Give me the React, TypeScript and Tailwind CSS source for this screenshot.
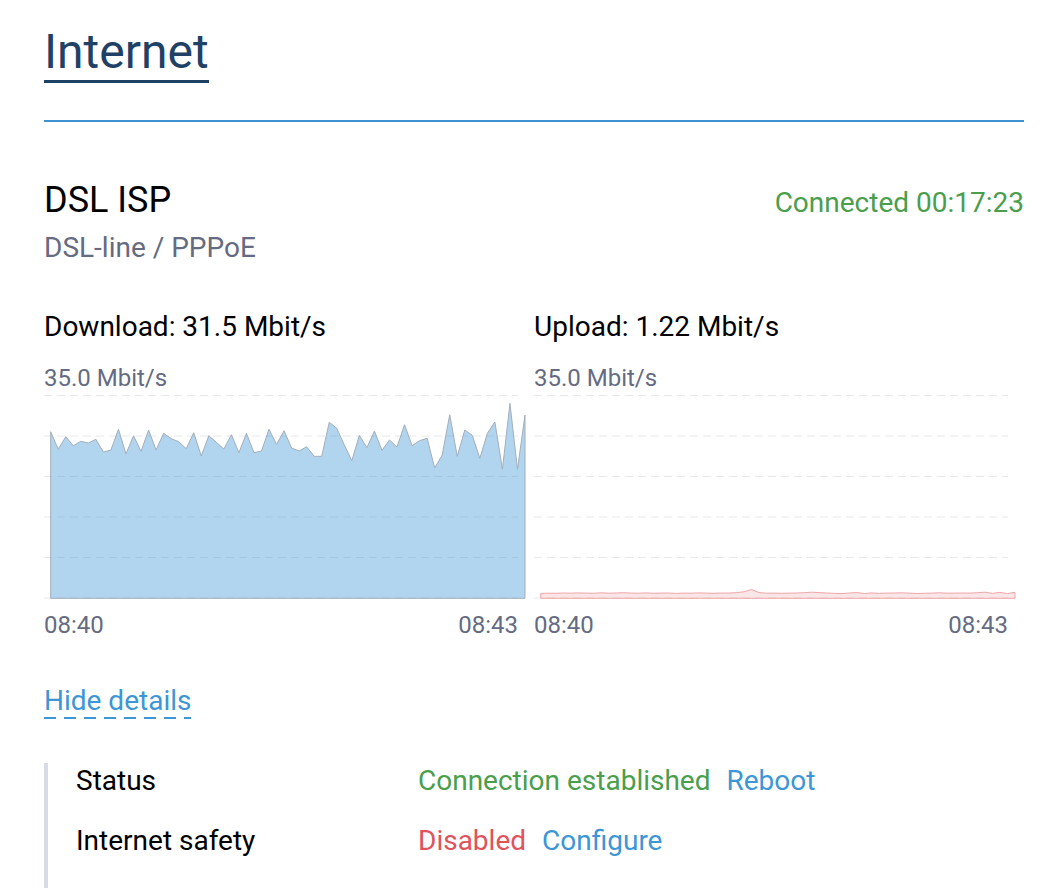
import React from "react";

const GRID = [0.5, 41, 81.5, 122, 162.5, 203];

const download = [
  36.7, 54.3, 41.7, 50.7, 46.3, 48, 44.3, 57, 55, 34.3, 59, 40.7, 56.3, 35, 55, 38.3,
  43.7, 46.7, 53.7, 37.7, 61, 40.7, 47.3, 54, 39.7, 57.7, 38.3, 57.7, 56, 34.3, 49.3, 35.7,
  53, 56, 51.7, 61.3, 61.3, 27.3, 33.3, 50, 65.7, 40.3, 52.7, 36, 55.3, 45, 52, 29.7,
  50.7, 45.7, 43.3, 73, 60, 19.7, 61.3, 35, 40.3, 63.3, 38.3, 27, 74.3, 8.3, 74.3, 20,
];

const upload = [
  198.4, 198.2, 198.3, 198, 198.2, 197.9, 198.1, 198.3, 197.8, 198.2, 198, 197.7, 198.1, 198.2, 197.9, 198.3,
  198.1, 198, 198.4, 198.1, 198.2, 197.9, 198.1, 198.3, 198, 198.1, 197.6, 196.8, 194.5, 197.6, 198.2, 198.1,
  198.3, 198.2, 198, 197.7, 197.2, 197.6, 198, 198.4, 198.6, 198, 197.6, 198.5, 197.9, 198.4, 198.1, 198,
  197.8, 198.2, 198.5, 198.3, 198.1, 197.8, 198.2, 198.1, 198, 198.1, 197.7, 197.2, 198.4, 197.4, 198.6, 197.3,
];

function Chart({ values, fill, stroke }: { values: number[]; fill: string; stroke: string }) {
  const step = (481 - 6.7) / (values.length - 1);
  const pts = values.map((v, i) => `${(6.7 + i * step).toFixed(2)},${v}`);
  const d = `M6.7,203.3 L${pts.join(" L")} L481,203.3 Z`;

  return (
    <svg width="490" height="205" className="block overflow-visible">
      {GRID.map((y) => (
        <line key={y} x1="0" x2="474" y1={y} y2={y} stroke="#e7e8ec" strokeWidth="1" strokeDasharray="8 5" />
      ))}
      <path d={d} fill={fill} stroke={stroke} strokeWidth="1" strokeLinejoin="round" />
    </svg>
  );
}

function Graph({ title, values, fill, stroke }: { title: string; values: number[]; fill: string; stroke: string }) {
  return (
    <div className="w-[490px]">
      <div className="text-[28px] leading-[36px] text-black">{title}</div>
      <div className="mt-[17px] text-[24px] leading-[32px] text-[#646b82]">35.0 Mbit/s</div>
      <div className="mt-px">
        <Chart values={values} fill={fill} stroke={stroke} />
      </div>
      <div className="mt-[9px] flex w-[474px] justify-between text-[24px] leading-[32px] text-[#646b82]">
        <span>08:40</span>
        <span>08:43</span>
      </div>
    </div>
  );
}

export default function App() {
  return (
    <div className="min-h-screen bg-white pl-[44px] pr-[36px] pt-[24px] font-[family-name:Roboto,sans-serif] antialiased">
      <div className="flex">
        <h1 className="border-b-[3px] border-[#1f4166] text-[48px] font-normal leading-[56px] text-[#1f4166]">
          Internet
        </h1>
      </div>
      <div className="mt-[37px] h-[2px] bg-[#3d93d2]" />

      <div className="mt-[56px] flex items-baseline justify-between">
        <div className="text-[36px] leading-[44px] text-black">DSL ISP</div>
        <div className="text-[28px] leading-[36px] text-[#4a9e4c]">Connected 00:17:23</div>
      </div>
      <div className="mt-[8px] text-[28px] leading-[36px] text-[#646b82]">DSL-line / PPPoE</div>

      <div className="mt-[43px] flex">
        <Graph title="Download: 31.5 Mbit/s" values={download} fill="rgba(61,150,214,0.4)" stroke="#a3aebb" />
        <Graph title="Upload: 1.22 Mbit/s" values={upload} fill="rgba(224,85,93,0.15)" stroke="#f0a6aa" />
      </div>

      <div className="mt-[42px] flex">
        <span className="cursor-pointer bg-[linear-gradient(to_right,#3d96d6_60%,transparent_60%)] bg-[length:20px_2px] bg-bottom-left bg-repeat-x text-[28px] leading-[36px] text-[#3d96d6]">
          Hide details
        </span>
      </div>

      <div className="mt-[44px] flex flex-col gap-[24px] border-l-4 border-[#d7dbe5] pb-[40px] pl-[28px] text-[28px] leading-[36px]">
        <div className="flex">
          <div className="w-[342px] text-black">Status</div>
          <div className="flex gap-[16px]">
            <span className="text-[#4a9e4c]">Connection established</span>
            <span className="cursor-pointer text-[#3d96d6]">Reboot</span>
          </div>
        </div>
        <div className="flex">
          <div className="w-[342px] text-black">Internet safety</div>
          <div className="flex gap-[16px]">
            <span className="text-[#e0535b]">Disabled</span>
            <span className="cursor-pointer text-[#3d96d6]">Configure</span>
          </div>
        </div>
      </div>
    </div>
  );
}
